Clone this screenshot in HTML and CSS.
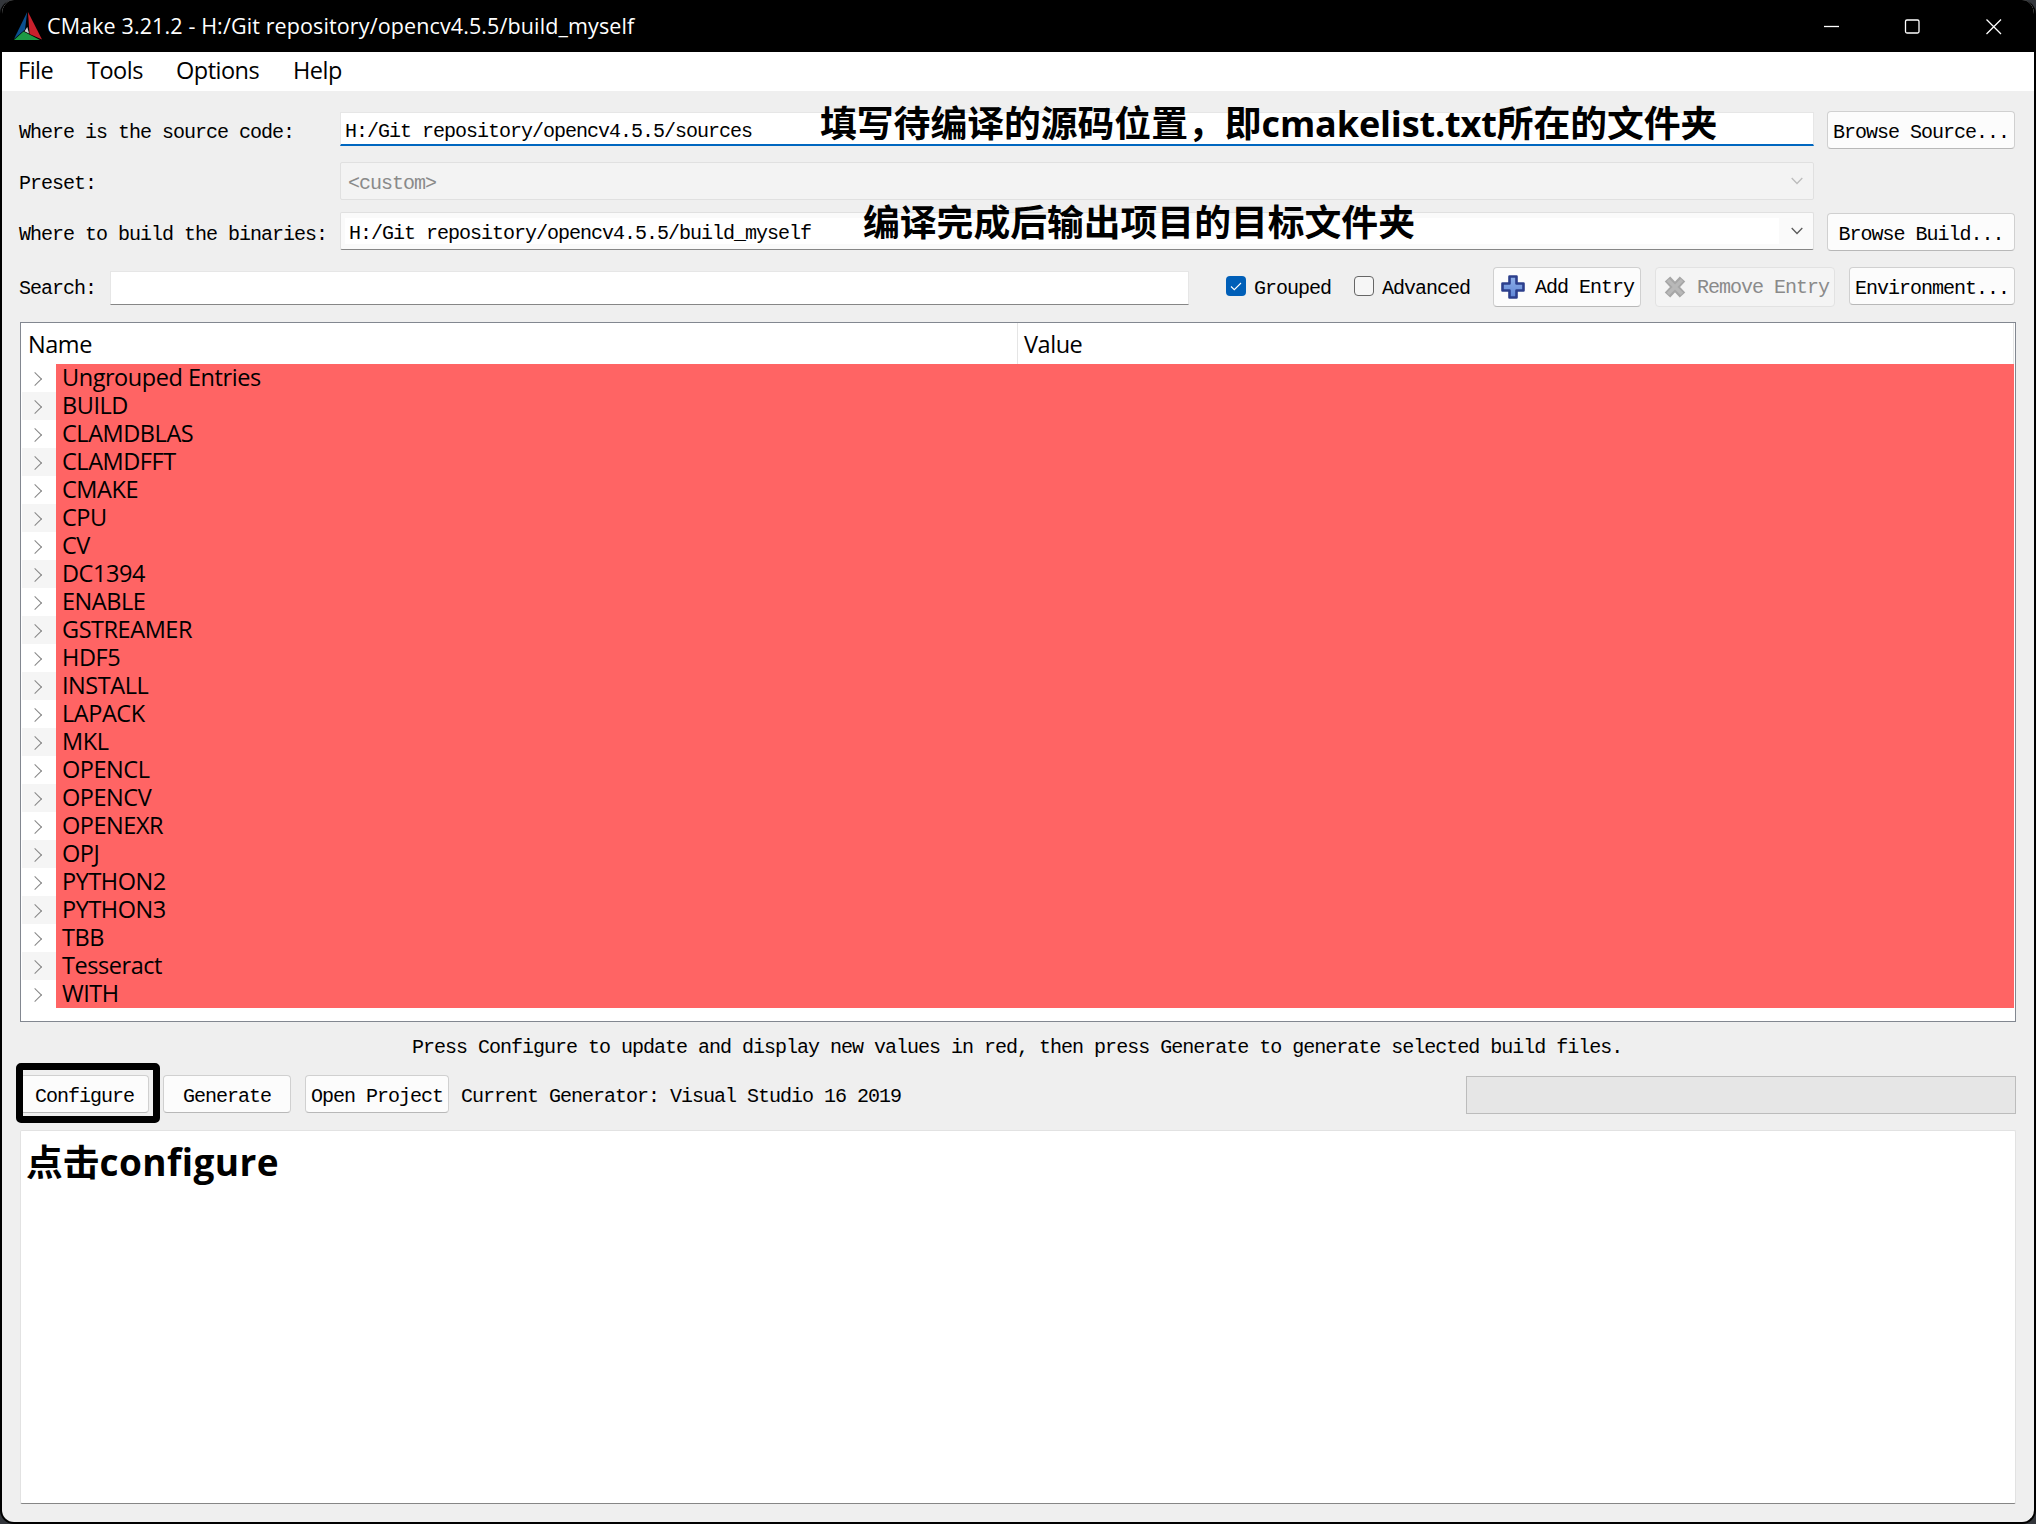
FILE: index.html
```html
<!DOCTYPE html>
<html lang="zh-CN">
<head>
<meta charset="utf-8">
<title>CMake 3.21.2</title>
<link rel="stylesheet" href="styles.css">
</head>
<body>
<div class="window">
  <header class="titlebar">
    <svg class="logo" width="28" height="28" viewBox="0 0 28 28">
      <path d="M13.2 0 L0 27 L11 17.500 Z" fill="#0a4f8f"/>
      <path d="M14 0 L28 27.500 L15.500 22 Z" fill="#c8202c"/>
      <path d="M0 28 L9.500 19.500 L26 28 Z" fill="#1d9a45"/>
      <path d="M13.300 15 L15 21.500 L10.500 19.300 Z" fill="#c9ced2"/>
    </svg>
    <span class="title">CMake 3.21.2 - H:/Git repository/opencv4.5.5/build_myself</span>
    <svg class="controls" width="190" height="52" viewBox="0 0 190 52" fill="none" stroke="#fff" stroke-width="1.300">
      <path d="M5 26.500H20"/>
      <rect x="86.500" y="20" width="13.500" height="13" rx="1.500"/>
      <path d="M167.500 19.500l14.500 14.500M182 19.500l-14.500 14.500"/>
    </svg>
  </header>
  <nav class="menu">
    <span class="m-file">File</span><span class="m-tools">Tools</span><span class="m-options">Options</span><span class="m-help">Help</span>
  </nav>
  <main class="content">
    <section class="paths">
      <label>Where is the source code:</label>
      <div class="field focused">H:/Git repository/opencv4.5.5/sources</div>
      <button class="btn">Browse Source...</button>

      <label>Preset:</label>
      <div class="combo disabled"><span>&lt;custom&gt;</span><svg class="arrow" width="12" height="8" viewBox="0 0 12 8"><path d="M.7 1L6 6.500L11.300 1"/></svg></div>
      <i></i>

      <label>Where to build the binaries:</label>
      <div class="combo editable"><span>H:/Git repository/opencv4.5.5/build_myself</span><svg class="arrow" width="12" height="8" viewBox="0 0 12 8"><path d="M.7 1L6 6.500L11.300 1"/></svg></div>
      <button class="btn">Browse Build...</button>
    </section>

    <section class="search">
      <label>Search:</label>
      <div class="field"></div>
      <span class="check on"><svg width="20" height="20" viewBox="0 0 20 20"><path d="M5 10.500l3.300 3.200L15 7" fill="none" stroke="#fff" stroke-width="1.100"/></svg></span>
      <span class="check-label">Grouped</span>
      <span class="check second"></span>
      <span class="check-label">Advanced</span>
      <button class="btn tall add"><svg width="24" height="24" viewBox="0 0 24 24"><defs><linearGradient id="plus" x1="0" y1="0" x2="0" y2="1"><stop offset="0" stop-color="#8fb0e8"/><stop offset="1" stop-color="#5f86d6"/></linearGradient></defs><path d="M8.500 1.500h7v7h7v7h-7v7h-7v-7h-7v-7h7z" fill="url(#plus)" stroke="#2c3f8c" stroke-width="2.600" stroke-linejoin="round"/></svg>Add Entry</button>
      <button class="btn tall remove" disabled><svg width="24" height="24" viewBox="0 0 24 24"><path d="M4.500 4l15 16M19.500 4l-15 16" stroke="#a6a6a6" stroke-width="7.500" fill="none"/><path d="M5 5l14 14M19 5l-14 14" stroke="#b8b8b8" stroke-width="3.500" fill="none"/></svg>Remove Entry</button>
      <button class="btn env">Environment...</button>
    </section>

    <section class="tree">
      <div class="tree-head"><span>Name</span><span>Value</span></div>
      <ul class="rows">
        <li><b></b><span>Ungrouped Entries</span></li>
        <li><b></b><span>BUILD</span></li>
        <li><b></b><span>CLAMDBLAS</span></li>
        <li><b></b><span>CLAMDFFT</span></li>
        <li><b></b><span>CMAKE</span></li>
        <li><b></b><span>CPU</span></li>
        <li><b></b><span>CV</span></li>
        <li><b></b><span>DC1394</span></li>
        <li><b></b><span>ENABLE</span></li>
        <li><b></b><span>GSTREAMER</span></li>
        <li><b></b><span>HDF5</span></li>
        <li><b></b><span>INSTALL</span></li>
        <li><b></b><span>LAPACK</span></li>
        <li><b></b><span>MKL</span></li>
        <li><b></b><span>OPENCL</span></li>
        <li><b></b><span>OPENCV</span></li>
        <li><b></b><span>OPENEXR</span></li>
        <li><b></b><span>OPJ</span></li>
        <li><b></b><span>PYTHON2</span></li>
        <li><b></b><span>PYTHON3</span></li>
        <li><b></b><span>TBB</span></li>
        <li><b></b><span>Tesseract</span></li>
        <li><b></b><span>WITH</span></li>
      </ul>
    </section>

    <p class="hint">Press Configure to update and display new values in red, then press Generate to generate selected build files.</p>

    <section class="actions">
      <button class="btn configure">Configure</button>
      <button class="btn generate">Generate</button>
      <button class="btn open">Open Project</button>
      <span class="generator">Current Generator: Visual Studio 16 2019</span>
      <div class="progress"></div>
    </section>

    <section class="output"></section>
  </main>
  <div class="note note-source">填写待编译的源码位置，即<span>cmakelist.txt</span>所在的文件夹</div>
  <div class="note note-build">编译完成后输出项目的目标文件夹</div>
  <div class="frame"></div>
  <div class="note note-configure">点击<span>configure</span></div>
</div>
</body>
</html>
```
FILE: styles.css
```css
* { box-sizing: border-box; }
body { margin: 0; background: #33363b; width: 2036px; height: 1524px; overflow: hidden; }
.window {
  position: relative;
  width: 2036px; height: 1524px;
  border: 2px solid #000; border-top: 0;
  border-radius: 14px;
  background: #efefef;
  overflow: hidden;
  font: 20px/38px "Liberation Mono", monospace;
  letter-spacing: -1px;
  color: #000;
  white-space: nowrap;
  display: flex; flex-direction: column;
}
.titlebar, .menu, .tree { font-family: "Open Sans", "Noto Sans", sans-serif; }
.titlebar {
  height: 52px; flex: none;
  display: flex; align-items: center;
  background: #000; color: #fff;
  padding-left: 12px;
}
.title { font-size: 21.500px; letter-spacing: 0.120px; margin-left: 5px; }
.controls { margin-left: auto; margin-right: 25px; }
.menu {
  height: 39px; flex: none;
  display: flex;
  background: #fff;
  font-size: 23.500px; line-height: 37px; letter-spacing: -0.500px;
  padding-left: 16px;
}
.m-file { width: 69px; }
.m-tools { width: 89px; }
.m-options { width: 117px; }
.content { padding: 20px 18px 0; display: flex; flex-direction: column; }
.paths {
  display: grid;
  grid-template-columns: 320px 1474px 188px;
  grid-template-rows: 38px 38px 38px;
  row-gap: 13px;
}
.paths > :nth-child(3n) { margin-left: 13px; margin-right: -13px; }
label, .hint, .generator, .check-label { line-height: 43px; height: 38px; }
label { margin-left: -1px; }
.field { background: #fff; border: 1px solid #e6e6e6; border-bottom: 1px solid #868686; height: 34px; }
.field.focused { border-bottom: 2px solid #0067c0; margin-top: 1px; padding-left: 4px; line-height: 37px; }
.combo {
  display: flex; align-items: center; justify-content: space-between;
  height: 38px;
  border: 1px solid #e0e0e0; border-radius: 2px;
  background: #f3f3f3; color: #8a8a8a;
  padding: 0 10px 0 7px;
}
.combo span { line-height: 41px; height: 36px; }
.arrow { fill: none; stroke: #bcbcbc; stroke-width: 1.300; }
.combo.editable { margin-top: -1px; color: #000; background: #fafafa; border-bottom-color: #868686; padding-left: 4px; }
.combo.editable span { background: #fff; width: 1434px; height: 26px; line-height: 31px; padding-left: 4px; }
.editable .arrow { stroke: #5a5a5a; }
.btn {
  font: inherit; letter-spacing: inherit; color: #000; white-space: nowrap;
  height: 38px; line-height: 41px;
  padding: 0; margin: 0;
  border: 1px solid #d0d0d0; border-bottom-color: #b8b8b8; border-radius: 4px;
  background: #fcfcfc;
}
.btn.tall { height: 40px; line-height: 42px; display: flex; align-items: center; padding: 2px 0 0 7px; gap: 10px; }
.btn.tall svg { margin-top: -2px; }
.btn:disabled { color: #8a8a8a; background: #f4f4f4; border-color: #e2e2e2; }
.search { display: flex; height: 40px; margin-top: 16px; }
.search label { width: 91px; line-height: 44px; }
.search .check-label { line-height: 44px; }
.search .field { width: 1079px; margin: 4px 37px 0 0; }
.check { width: 20px; height: 20px; margin: 9px 8px 0 0; border: 1px solid #666; border-radius: 4px; background: #f6f6f6; flex: none; }
.check.on { background: #005fb8; border: 0; }
.check.on svg { display: block; }
.check-label { width: 100px; flex: none; }
.check.second + .check-label { width: 111px; }
.add { width: 148px; }
.search .remove { width: 180px; margin: 0 14px; }
.env { width: 166px; }
.tree {
  width: 1996px; height: 700px; margin-top: 15px;
  border: 1px solid #828790; background: #fff;
  padding: 0 1px;
  font-size: 23.500px; letter-spacing: -0.450px;
}
.tree-head { display: flex; height: 41px; line-height: 42px; }
.tree-head span { width: 996px; padding-left: 6px; border-right: 1px solid #e5e5e5; }
.rows { list-style: none; margin: 0; padding: 0; }
.rows li { display: flex; height: 28px; }
.rows li:nth-child(even) { background: #f5f5f5; }
.rows b { width: 34px; flex: none; padding: 10px 0 0 8px; }
.rows b::before {
  content: ""; display: block; width: 9px; height: 9px;
  border: solid #858585; border-width: 1.500px 1.500px 0 0;
  transform: rotate(45deg);
}
.rows span { flex: 1; height: 28px; line-height: 26px; padding-left: 6px; background: #ff6464; }
.hint { margin: 4px 0 0; padding-left: 392px; }
.actions { display: flex; height: 38px; margin-top: 11px; }
.configure { width: 129px; }
.generate { width: 128px; margin-left: 14px; }
.open { width: 144px; margin: 0 12px 0 14px; }
.progress { width: 550px; margin: 1px 0 -1px auto; background: #e6e6e6; border: 1px solid #bcbcbc; }
.actions, .output { width: 1996px; }
.output { height: 374px; margin-top: 17px; background: #fff; border: 1px solid #e2e2e2; border-bottom-color: #868686; border-radius: 2px; }
.note {
  position: absolute;
  font: bold 36.800px/48px "Noto Sans CJK SC", sans-serif;
  letter-spacing: 0;
}
.note span { font-family: "Open Sans", sans-serif; font-size: 36px; letter-spacing: -0.150px; }
.note-source { left: 818px; top: 97px; }
.note-build { left: 861px; top: 196px; }
.note-configure { left: 24px; top: 1136px; }
.note-configure span { font-size: 37px; letter-spacing: 0.400px; }
.frame { position: absolute; left: 14px; top: 1063px; width: 144px; height: 60px; border: 7px solid #000; border-radius: 5px; }
```
